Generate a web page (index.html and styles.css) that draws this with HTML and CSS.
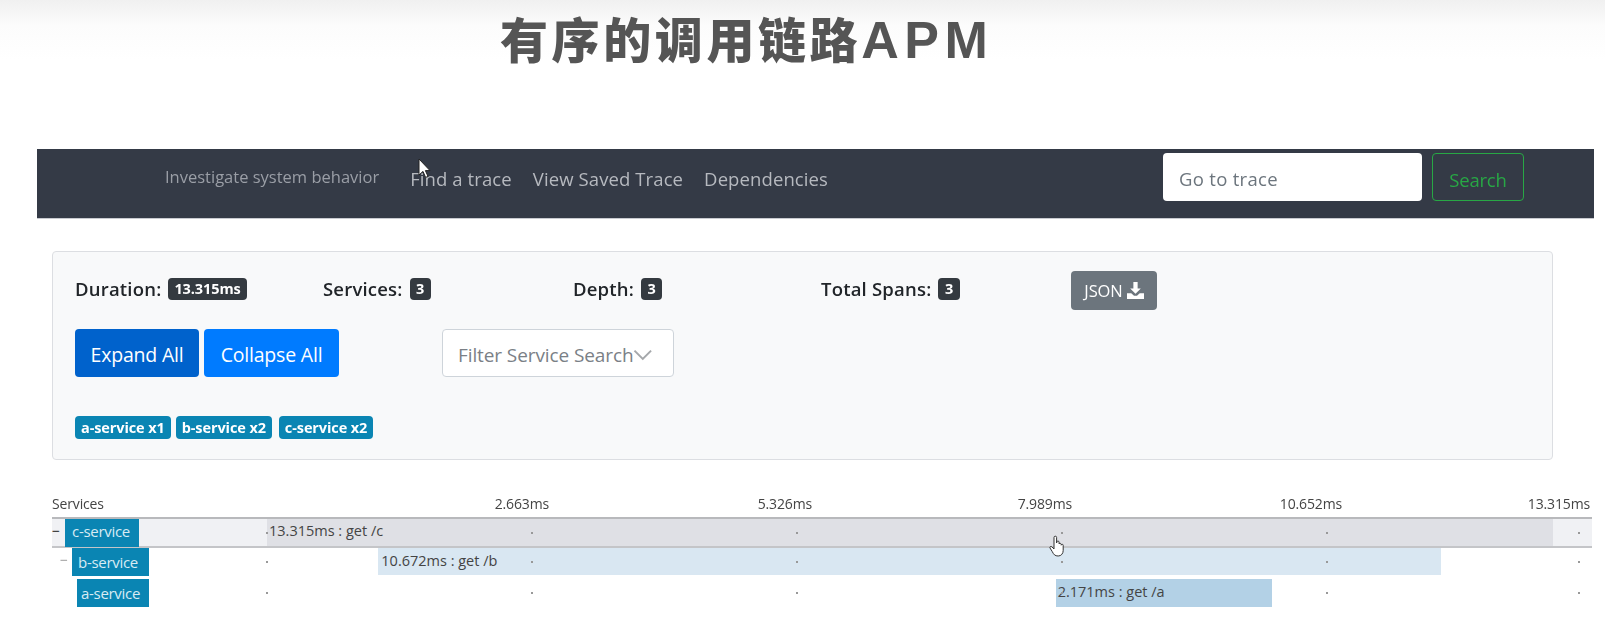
FILE: index.html
```html
<!DOCTYPE html>
<html lang="zh">
<head>
<meta charset="utf-8">
<title>有序的调用链路APM</title>
<link rel="stylesheet" href="styles.css">
</head>
<body>
<header class="slide-head"><h1 class="slide-title">有序的调用链路<span class="title-latin">APM</span></h1></header>
<nav class="navbar">
  <span class="brand-text">Investigate system behavior</span>
  <a class="nav-link">Find a trace</a>
  <a class="nav-link">View Saved Trace</a>
  <a class="nav-link">Dependencies</a>
  <form class="nav-form">
    <input class="trace-input" placeholder="Go to trace">
    <button class="search-btn" type="button">Search</button>
  </form>
</nav>
<svg class="cursor-arrow" width="13" height="21" viewBox="0 0 13 21"><path d="M1 1v16l4-3.600 2.600 6 2.400-1-2.600-5.800H12z" fill="#fff" stroke="#222" stroke-width="1"/></svg>
<main class="content">
  <section class="summary">
    <div class="stats">
      <div class="stat stat-duration"><b>Duration:</b><span class="badge-dark">13.315ms</span></div>
      <div class="stat stat-services"><b>Services:</b><span class="badge-dark">3</span></div>
      <div class="stat stat-depth"><b>Depth:</b><span class="badge-dark">3</span></div>
      <div class="stat stat-spans"><b>Total Spans:</b><span class="badge-dark">3</span></div>
      <button class="json-btn" type="button">JSON
        <svg width="17" height="17" viewBox="0 0 16 16"><path d="M6 0h4v6h3l-5 5-5-5h3z" fill="#fff"/><path d="M0 10.500h4l2.600 2.500h2.800l2.600-2.500h4V16H0z" fill="#fff"/></svg>
      </button>
    </div>
    <div class="controls">
      <button class="btn btn-expand" type="button">Expand All</button>
      <button class="btn btn-collapse" type="button">Collapse All</button>
      <div class="filter">Filter Service Search
        <svg width="20" height="12" viewBox="0 0 20 12"><path d="M1.500 1.500 10 10l8.500-8.500" fill="none" stroke="#a5a8ab" stroke-width="2"/></svg>
      </div>
    </div>
    <div class="tags">
      <span class="tag">a-service x1</span>
      <span class="tag">b-service x2</span>
      <span class="tag">c-service x2</span>
    </div>
  </section>
  <section class="timeline">
    <div class="time-head">
      <span class="time-services">Services</span>
      <span>2.663ms</span><span>5.326ms</span><span>7.989ms</span><span>10.652ms</span><span>13.315ms</span>
    </div>
    <div class="row row-c">
      <div class="svc svc-c"><i class="toggle">−</i><span class="svc-name">c-service</span></div>
      <div class="track"><div class="bar bar-c" style="margin-left:0;width:97.06%">13.315ms : get /c</div></div>
      <div class="dots"><i></i><i></i><i></i><i></i><i></i><i></i></div>
    </div>
    <div class="row row-b">
      <div class="svc svc-b"><i class="toggle toggle-light">−</i><span class="svc-name">b-service</span></div>
      <div class="track"><div class="bar bar-b" style="margin-left:8.4%;width:80.2%">10.672ms : get /b</div></div>
      <div class="dots"><i></i><i></i><i></i><i></i><i></i><i></i></div>
    </div>
    <div class="row row-a">
      <div class="svc svc-a"><span class="svc-name">a-service</span></div>
      <div class="track"><div class="bar bar-a" style="margin-left:59.52%;width:16.3%">2.171ms : get /a</div></div>
      <div class="dots"><i></i><i></i><i></i><i></i><i></i><i></i></div>
    </div>
  </section>
</main>
<svg class="cursor-hand" width="16" height="22" viewBox="0 0 16 22"><path d="M5 9V2.500a1.300 1.300 0 0 1 2.600 0V8l.2-1.200a1.200 1.200 0 0 1 2.300.3V9a1.100 1.100 0 0 1 2.100.4v.8a1 1 0 0 1 2 .3v5c0 3-2 5.500-5 5.500-3.300 0-4.500-1.500-6-4.500L1 13c-.6-1.300 1-2.200 2-1l2 2z" fill="#fff" stroke="#333" stroke-width="1"/></svg>
</body>
</html>
```

FILE: styles.css
```css
* { box-sizing: border-box; }
html, body { margin: 0; height: 625px; overflow: hidden; }
body {
  position: relative;
  background: linear-gradient(#f0f0f0 0, #fcfcfc 26px, #fff 60px);
  font-family: "Open Sans", "Noto Sans", "Noto Sans CJK SC", sans-serif;
  color: #212529;
  filter: blur(.35px);
}
.slide-head { height: 149px; padding: 5px 0 0 500px; }
.slide-title {
  margin: 0;
  font: 900 48px/64px "Noto Sans CJK SC", sans-serif;
  letter-spacing: 3.6px;
  color: #555;
}
.title-latin { font-family: "Liberation Sans", sans-serif; font-weight: 700; font-size: 52px; letter-spacing: 5.500px; }
.navbar {
  display: flex;
  align-items: center;
  width: 1557px;
  height: 70px;
  margin-left: 37px;
  padding: 0 0 10px 128px;
  background: #343a46;
  border-bottom: 1px solid #c8cad0;
}
.brand-text { font-size: 16.500px; color: #9a9ea6; margin-right: 31px; position: relative; top: -2px; }
.nav-link { font-size: 18.500px; letter-spacing: .1px; color: #b6b9bf; margin-right: 21px; }
.nav-form { display: flex; gap: 10px; margin-left: auto; margin-right: 70px; align-self: flex-start; margin-top: 4px; }
.trace-input {
  width: 259px; height: 48px; padding: 3px 16px 0;
  border: 0; border-radius: 4px; background: #fff;
  font: 18.500px "Open Sans", sans-serif; letter-spacing: .3px;
}
.trace-input::placeholder { color: #6c757d; opacity: 1; }
.search-btn {
  width: 92px; height: 48px; padding: 4px 0 0;
  border: 1.500px solid #28a745; border-radius: 4px; background: transparent;
  color: #28a745; font: 18.500px "Open Sans", sans-serif; letter-spacing: -.2px;
}
.cursor-arrow { position: absolute; left: 418px; top: 158px; }
.cursor-hand { position: absolute; left: 1049px; top: 535px; }
.content { padding: 32px 0 0 52px; }
.summary {
  width: 1501px; height: 209px;
  padding: 18px 22px 0;
  background: #f8f9fa;
  border: 1px solid #dcdee2;
  border-radius: 4px;
}
.stats { display: flex; align-items: center; height: 40px; font-size: 18.500px; letter-spacing: .2px; }
.stat { display: flex; align-items: center; gap: 7px; position: relative; top: -2px; }
.stat b { font-weight: 600; color: #212529; }
.stat-duration { width: 248px; }
.stat-services { width: 250px; }
.stat-depth { width: 248px; }
.stat-spans { width: 250px; }
.badge-dark {
  display: inline-block; height: 22px; padding: 0 6px; margin-top: 2px;
  background: #343a40; color: #fff; border-radius: 4px;
  font-size: 14.500px; font-weight: 700; line-height: 22px; letter-spacing: -.1px;
}
.stat-services .badge-dark, .stat-depth .badge-dark, .stat-spans .badge-dark { padding: 0 6.500px; }
.json-btn {
  display: flex; align-items: center; justify-content: center; gap: 4px;
  width: 86px; height: 39px; padding: 0;
  background: #6c757d; color: #fff; border: 0; border-radius: 4px;
  font: 16.500px "Open Sans", sans-serif; letter-spacing: -.1px;
}
.controls { display: flex; align-items: center; gap: 5px; margin-top: 19px; }
.btn {
  height: 48px; padding: 2px 0 0; border: 0; border-radius: 4px; color: #fff;
  font: 19.500px "Open Sans", sans-serif; letter-spacing: -.2px;
}
.btn-expand { width: 124px; background: #0062cc; }
.btn-collapse { width: 135px; background: #007bff; }
.filter {
  display: flex; align-items: center; justify-content: space-between;
  width: 232px; height: 48px; margin-left: 98px; padding: 4px 20px 0 15px;
  background: #fff; border: 1px solid #ced4da; border-radius: 4px;
  color: #7a8086; font-size: 19px; letter-spacing: -.1px; white-space: nowrap;
}
.tags { display: flex; gap: 5px; margin-top: 39px; }
.tag {
  height: 23px; padding: 0 6px; border-radius: 4px;
  background: #0a85b3; color: #fff;
  font-size: 14.500px; font-weight: 700; line-height: 23px; letter-spacing: -.1px; white-space: nowrap;
}
.tag:last-child { margin-left: 2px; }
.timeline { width: 1540px; margin-top: 34px; font-size: 14px; letter-spacing: -.15px; color: #444; }
.time-head {
  display: grid;
  grid-template-columns: 157px 340px 263px 260px 270px 248px;
  justify-items: end;
  height: 23px; line-height: 20px;
}
.time-services { justify-self: start; }
.row { position: relative; display: flex; }
.row-c { height: 31px; background: #f0f1f4; border-top: 2px solid #b8b9bc; border-bottom: 2px solid #c4c5c8; }
.row-b { height: 31px; }
.row-a { height: 29px; }
.svc { display: flex; align-items: flex-start; width: 215px; flex: none; }
.svc-c { padding-left: 13px; }
.svc-b { padding-left: 20px; }
.svc-a { padding-left: 25px; }
.toggle { position: absolute; font-style: normal; color: #111; left: 0; top: 2px; }
.toggle-light { left: 8px; color: #999; }
.svc-name {
  display: block; height: 28px; padding: 0 7px;
  background: #0a85b3; color: #d8ebf3; font-size: 15px; line-height: 25px; letter-spacing: -.3px; white-space: nowrap;
}
.svc-c .svc-name { width: 74px; }
.svc-b .svc-name { width: 77px; padding-left: 6px; line-height: 28px; }
.svc-a .svc-name { width: 72px; padding-left: 4px; line-height: 28px; }
.track { flex: 1; min-width: 0; }
.bar { height: 100%; padding-left: 3px; font-size: 14.500px; letter-spacing: 0; line-height: 26px; white-space: nowrap; }
.bar-c { background: #dfe0e5; height: 27px; line-height: 24px; padding-left: 2px; }
.bar-b { background: #d9e7f2; height: 27px; }
.bar-a { background: #b3d1e6; height: 28px; padding-left: 2px; }
.dots { position: absolute; left: 214px; top: 13px; display: flex; }
.dots i { width: 2px; height: 2px; background: #999; margin-right: 263px; }
.dots i:nth-child(5) { margin-right: 250px; }
.dots i:last-child { margin-right: 0; }
```
